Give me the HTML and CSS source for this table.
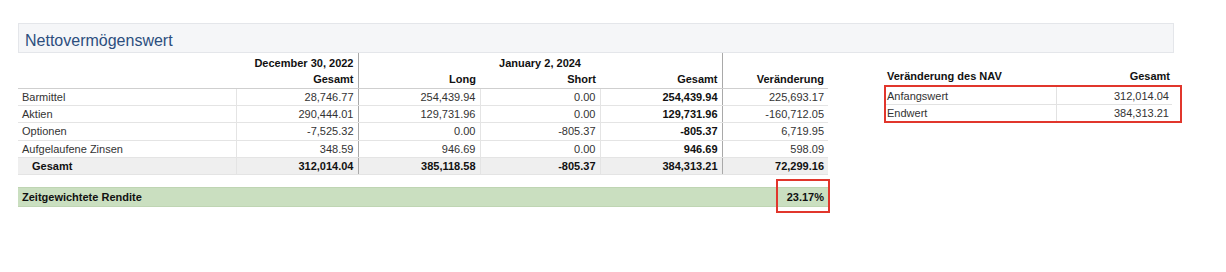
FILE: index.html
```html
<!DOCTYPE html>
<html lang="de">
<head>
<meta charset="utf-8">
<title>Nettovermögenswert</title>
<link rel="stylesheet" href="styles.css">
</head>
<body>
<div class="page">
  <div class="title-bar"><h1 class="title">Nettovermögenswert</h1></div>
  <div class="content">
    <div class="main">
      <table class="nav">
        <colgroup>
          <col class="c-label"><col class="c-num"><col class="c-num"><col class="c-short"><col class="c-num"><col class="c-chg">
        </colgroup>
        <thead>
          <tr class="h1">
            <th></th>
            <th class="sep num">December 30, 2022</th>
            <th class="sep center" colspan="3">January 2, 2024</th>
            <th></th>
          </tr>
          <tr class="h2">
            <th></th>
            <th class="sep num">Gesamt</th>
            <th class="num">Long</th>
            <th class="num">Short</th>
            <th class="sep num">Gesamt</th>
            <th class="num">Veränderung</th>
          </tr>
        </thead>
        <tbody>
          <tr>
            <td class="lbl">Barmittel</td>
            <td class="num sep">28,746.77</td>
            <td class="num">254,439.94</td>
            <td class="num">0.00</td>
            <td class="num sep strong">254,439.94</td>
            <td class="num">225,693.17</td>
          </tr>
          <tr>
            <td class="lbl">Aktien</td>
            <td class="num sep">290,444.01</td>
            <td class="num">129,731.96</td>
            <td class="num">0.00</td>
            <td class="num sep strong">129,731.96</td>
            <td class="num">-160,712.05</td>
          </tr>
          <tr>
            <td class="lbl">Optionen</td>
            <td class="num sep">-7,525.32</td>
            <td class="num">0.00</td>
            <td class="num">-805.37</td>
            <td class="num sep strong">-805.37</td>
            <td class="num">6,719.95</td>
          </tr>
          <tr>
            <td class="lbl">Aufgelaufene Zinsen</td>
            <td class="num sep">348.59</td>
            <td class="num">946.69</td>
            <td class="num">0.00</td>
            <td class="num sep strong">946.69</td>
            <td class="num">598.09</td>
          </tr>
          <tr class="total">
            <td class="lbl">Gesamt</td>
            <td class="num sep">312,014.04</td>
            <td class="num">385,118.58</td>
            <td class="num">-805.37</td>
            <td class="num sep">384,313.21</td>
            <td class="num">72,299.16</td>
          </tr>
        </tbody>
      </table>
      <div class="twr">
        <span class="twr-label">Zeitgewichtete Rendite</span>
        <span class="twr-value">23.17%</span>
      </div>
    </div>
    <div class="side">
      <div class="side-head">
        <span>Veränderung des NAV</span>
        <span class="num">Gesamt</span>
      </div>
      <div class="side-box">
        <div class="side-row">
          <span class="side-lbl">Anfangswert</span>
          <span class="side-val">312,014.04</span>
        </div>
        <div class="side-row">
          <span class="side-lbl">Endwert</span>
          <span class="side-val">384,313.21</span>
        </div>
      </div>
    </div>
  </div>
</div>
</body>
</html>
```

FILE: styles.css
```css
* { box-sizing: border-box; }

html, body {
  margin: 0;
  padding: 0;
  background: #ffffff;
}

body {
  font-family: "Liberation Sans", Arial, Helvetica, sans-serif;
  font-size: 11px;
  color: #222;
}

.page {
  padding: 23px 0 40px 18px;
}

.title-bar {
  width: 1156px;
  height: 30px;
  background: #f5f6f8;
  border: 1px solid #e4e6ea;
  display: flex;
  align-items: center;
  padding-left: 6px;
  padding-top: 5px;
}

.title {
  margin: 0;
  font-size: 16px;
  font-weight: normal;
  color: #2c4e7e;
}

.content {
  display: flex;
  align-items: flex-start;
}

.main {
  width: 810px;
}

/* main table */
.nav {
  width: 810px;
  table-layout: fixed;
  border-collapse: collapse;
}

.c-label { width: 218px; }
.c-num { width: 122px; }
.c-short { width: 120px; }
.c-chg { width: 106px; }

.nav th,
.nav td {
  padding: 0 4px;
  white-space: nowrap;
  line-height: 14px;
}

.nav th {
  font-weight: bold;
  color: #111;
}

.nav .h1 th { height: 17px; padding-top: 2px; }
.nav .h2 th {
  height: 18px;
  border-bottom: 1px solid #cfcfcf;
}

.num { text-align: right; }
.center { text-align: center; }

.nav td {
  height: 17.4px;
  border-bottom: 1px solid #e4e4e4;
  border-right: 1px solid #e4e4e4;
  color: #333;
}

.nav td:last-child { border-right: none; }

.nav .sep { border-right: 1px solid #a9a9a9; }
.nav td.sep { border-right: 1px solid #a9a9a9; }

.nav .strong {
  font-weight: bold;
  color: #111;
}

.nav .total td {
  background: #efefef;
  font-weight: bold;
  color: #111;
}

.nav .total .lbl { padding-left: 14px; }

/* time-weighted return */
.twr {
  margin-top: 12px;
  height: 20px;
  background: #cadfc0;
  border-top: 1px solid #bfd5b3;
  border-bottom: 1px solid #bfd5b3;
  display: flex;
  align-items: stretch;
  justify-content: space-between;
  font-weight: bold;
  color: #111;
}

.twr-label {
  padding-left: 4px;
  display: flex;
  align-items: center;
}

.twr-value {
  position: relative;
  width: 54px;
  padding-right: 4px;
  display: flex;
  align-items: center;
  justify-content: flex-end;
}

.twr-value::after {
  content: "";
  position: absolute;
  top: -9px;
  bottom: -7px;
  left: 2px;
  right: -2px;
  border: 2px solid #e1362c;
}

/* side table */
.side {
  margin-left: 56px;
  padding-top: 14px;
  width: 298px;
}

.side-head {
  width: 288px;
  height: 18px;
  display: flex;
  justify-content: space-between;
  align-items: center;
  padding: 0 2px 0 3px;
  font-weight: bold;
  color: #111;
}

.side-box {
  width: 298px;
  border: 2px solid #e1362c;
  padding-right: 8px;
}

.side-row {
  display: grid;
  grid-template-columns: 171px 1fr;
  height: 17px;
  align-items: center;
  color: #333;
}

.side-row + .side-row { border-top: 1px solid #e2e2e2; height: 17px; }

.side-lbl {
  padding-left: 1px;
  border-right: 1px solid #e2e2e2;
  height: 100%;
  display: flex;
  align-items: center;
}

.side-val {
  text-align: right;
  padding-right: 3px;
}
```
